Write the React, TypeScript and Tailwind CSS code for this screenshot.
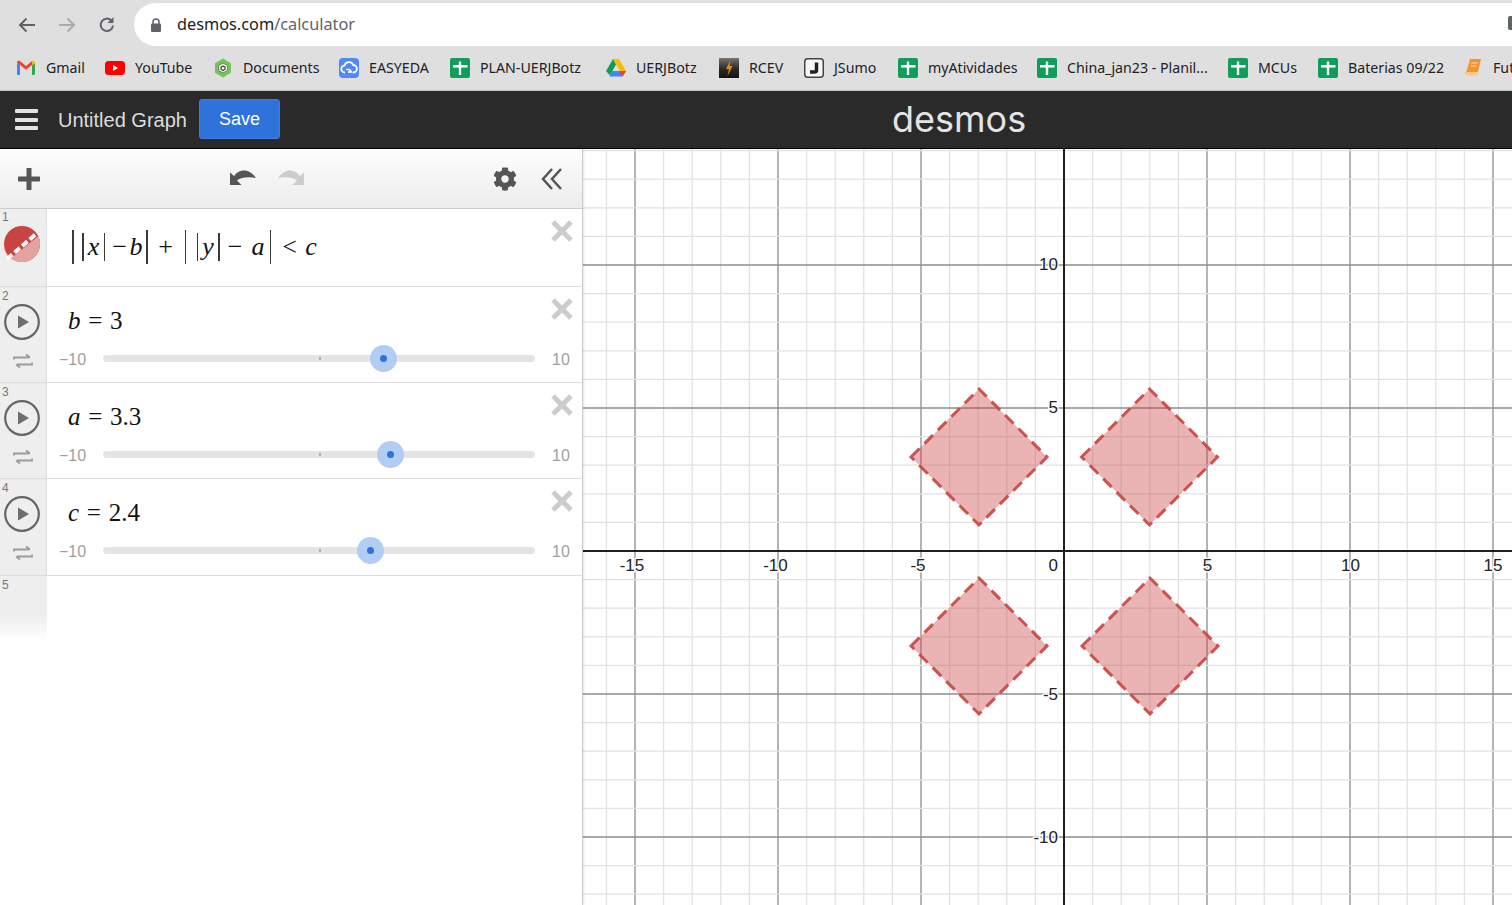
import React from "react";
import { FaCog } from "react-icons/fa";

const UNIT = 28.6;
const OX = 1064;
const OY = 551;

function Sheet() {
  return (
    <svg width="20" height="20" viewBox="0 0 20 20">
      <rect width="20" height="20" rx="2" fill="#0f9d58" />
      <rect x="3" y="7" width="14.500" height="2.600" fill="#fff" />
      <rect x="8.800" y="3.500" width="2.400" height="13.500" fill="#fff" />
    </svg>
  );
}
function Gmail() {
  return (
    <svg width="20" height="16" viewBox="0 0 20 16">
      <path d="M1 15V3l3 2v10H2a1 1 0 0 1-1-1z" fill="#4285f4" />
      <path d="M19 15V3l-3 2v10h2a1 1 0 0 0 1-1z" fill="#34a853" />
      <path d="M1 2.500C1 .8 3 .2 4 1l6 5 6-5v4l-6 4.800L4 5 1 3z" fill="#ea4335" />
      <path d="M16 1c1-.8 3-.2 3 1.500V3l-3 2z" fill="#fbbc04" />
    </svg>
  );
}
function YouTube() {
  return (
    <svg width="20" height="14" viewBox="0 0 20 14">
      <rect width="20" height="14" rx="3.500" fill="#f00" />
      <path d="M8 4l5 3-5 3z" fill="#fff" />
    </svg>
  );
}
function DocsIcon() {
  return (
    <svg width="20" height="20" viewBox="0 0 20 20">
      <path d="M10 .5l8 4.800v9.400l-8 4.800-8-4.800V5.300z" fill="#76c35a" />
      <path d="M10 5l4.500 2.500v5L10 15l-4.500-2.500v-5z" fill="#eef4ea" stroke="#5f8f55" strokeWidth="1" />
      <path d="M10 8l2 1.200v2L10 12.500l-2-1.300v-2z" fill="none" stroke="#444" strokeWidth="1.200" />
    </svg>
  );
}
function EasyEda() {
  return (
    <svg width="20" height="20" viewBox="0 0 20 20">
      <rect width="20" height="20" rx="4" fill="#5288f5" />
      <path d="M6 14.500a3.500 3.500 0 0 1-.4-7A4.600 4.600 0 0 1 14.300 7a3.700 3.700 0 0 1-.3 7.500" fill="none" stroke="#fff" strokeWidth="1.800" />
      <path d="M7 11.500h3.500l2 2.500H9" fill="none" stroke="#fff" strokeWidth="1.600" />
    </svg>
  );
}
function Drive() {
  return (
    <svg width="20" height="18" viewBox="0 0 20 18">
      <path d="M7 0h6l7 12h-6z" fill="#fbbc04" />
      <path d="M7 0l3 5.500L4 16.500 0 12z" fill="#0f9d58" />
      <path d="M6.500 12H20l-3.500 5.500H3.500z" fill="#4285f4" />
      <path d="M13 12h7l-3.500 5.500z" fill="#ea4335" />
    </svg>
  );
}
function Rcev() {
  return (
    <svg width="20" height="20" viewBox="0 0 20 20">
      <defs>
        <linearGradient id="rcevbg" x1="0" y1="0" x2="0" y2="1">
          <stop offset="0" stopColor="#7a7672" />
          <stop offset="0.5" stopColor="#2f2c2a" />
          <stop offset="1" stopColor="#111" />
        </linearGradient>
      </defs>
      <rect width="20" height="20" fill="url(#rcevbg)" />
      <path d="M11.500 2L7 11h3l-1.500 7L13.500 8h-3z" fill="#e08e1b" />
    </svg>
  );
}
function JSumo() {
  return (
    <svg width="20" height="20" viewBox="0 0 20 20">
      <rect x="0.750" y="0.750" width="18.500" height="18.500" rx="3" fill="#f7f7f7" stroke="#444" strokeWidth="1.500" />
      <path d="M12.500 4.500v7.500a2 2 0 0 1-2 2H6" fill="none" stroke="#222" strokeWidth="3.500" />
    </svg>
  );
}
function Book() {
  return (
    <svg width="20" height="20" viewBox="0 0 20 20">
      <path d="M7 1h11l-3.500 15H3.500c-1.500 0-1.500-2 0-2.500z" fill="#f59331" />
      <path d="M3.500 14H15l-.5 3.500H4c-1.500 0-2-2.500-.5-3.500z" fill="#fbc98a" />
      <path d="M8.500 5h6M8 8h6" stroke="#fde3c4" strokeWidth="1" />
    </svg>
  );
}

const bookmarks: [React.ReactNode, string, string][] = [
  [<Gmail />, "Gmail", "w-[39px]"],
  [<YouTube />, "YouTube", "w-[58px]"],
  [<DocsIcon />, "Documents", "w-[76px]"],
  [<EasyEda />, "EASYEDA", "w-[61px]"],
  [<Sheet />, "PLAN-UERJBotz", "w-[106px]"],
  [<Drive />, "UERJBotz", "w-[63px]"],
  [<Rcev />, "RCEV", "w-[35px]"],
  [<JSumo />, "JSumo", "w-[44px]"],
  [<Sheet />, "myAtividades", "w-[89px]"],
  [<Sheet />, "China_jan23 - Planil...", "w-[141px]"],
  [<Sheet />, "MCUs", "w-[40px]"],
  [<Sheet />, "Baterias 09/22", "w-[95px]"],
  [<Book />, "Fut", "w-[19px]"],
];

function BrowserChrome() {
  return (
    <div className="bg-[#dfdfdf] h-[91px] shrink-0 border-b border-[#c4c4c4] overflow-hidden font-['Noto_Sans','Open_Sans',sans-serif]">
      <div className="flex h-[46px] pt-[3px]">
        <div className="w-[134px] shrink-0 flex items-center pl-[17px] gap-[20px] text-[#5f6368]">
          <svg width="20" height="20" viewBox="0 0 20 20" fill="none" stroke="#5f6368" strokeWidth="2">
            <path d="M18 10H3M9.500 3.500L3 10l6.500 6.500" />
          </svg>
          <svg width="20" height="20" viewBox="0 0 20 20" fill="none" stroke="#a9abad" strokeWidth="2">
            <path d="M2 10h15M10.500 3.500L17 10l-6.500 6.500" />
          </svg>
          <svg width="20" height="20" viewBox="0 0 20 20" fill="none" stroke="#5f6368" strokeWidth="2">
            <path d="M16 10.500A6.200 6.200 0 1 1 14.300 5.500" />
            <path d="M16.500 2v6h-6z" fill="#5f6368" stroke="none" />
          </svg>
        </div>
        <div className="flex-1 bg-white rounded-l-[22px] flex items-center pl-[16px] relative">
          <svg width="12" height="14" viewBox="0 0 12 14" className="mr-[15px]">
            <path d="M3 6V4a3 3 0 0 1 6 0v2" fill="none" stroke="#5f6368" strokeWidth="1.500" />
            <rect x="1" y="5.500" width="10" height="8.500" rx="1.200" fill="#5f6368" />
          </svg>
          <span className="text-[16.300px] leading-none text-[#202124]">
            desmos.com<span className="text-[#5f6368]">/calculator</span>
          </span>
          <div className="absolute left-[1374px] top-[13px] w-[10px] h-[14px] rounded-[2px] bg-[#5f6368]" />
        </div>
      </div>
      <div className="flex items-center h-[44px] pl-[16px] gap-[20px] whitespace-nowrap">
        {bookmarks.map(([icon, label, w], i) => (
          <div key={i} className="flex items-center gap-[10px] shrink-0">
            <div className="w-[20px] h-[20px] flex items-center justify-center">{icon}</div>
            <span className={`${w} text-[14.200px] leading-none pt-[1px] text-[#202124]`}>{label}</span>
          </div>
        ))}
      </div>
    </div>
  );
}

function AppHeader() {
  return (
    <div className="relative h-[58px] shrink-0 bg-[#2a2a2a] border-b border-black flex items-center font-['Liberation_Sans',sans-serif]">
      <div className="ml-[15px] w-[23px] flex flex-col gap-[4.500px]">
        <div className="h-[4px] rounded-[1px] bg-[#e2e2e2]" />
        <div className="h-[4px] rounded-[1px] bg-[#e2e2e2]" />
        <div className="h-[4px] rounded-[1px] bg-[#e2e2e2]" />
      </div>
      <span className="ml-[20px] text-[20px] text-[#dddddd]">Untitled Graph</span>
      <button className="ml-[12px] mb-[1px] w-[81px] h-[40px] rounded-[3px] bg-[#2f72dc] border border-[#3f7fe0] text-white text-[18px] pt-[1px]">Save</button>
      <div className="absolute left-[892px] top-[6px] font-['Inter',sans-serif] text-[36px] leading-[44px] font-normal text-[#e4e4e4]">desmos</div>
    </div>
  );
}

function CloseX() {
  return (
    <svg width="24" height="24" viewBox="0 0 24 24" className="absolute right-[8px] top-[10px]">
      <path d="M3 3l18 18M21 3L3 21" stroke="#cccccc" strokeWidth="5" />
    </svg>
  );
}

function PanelToolbar() {
  return (
    <div className="h-[60px] shrink-0 flex items-center border-b border-[#cccccc] bg-gradient-to-b from-[#fdfdfd] to-[#ececec] pl-[18px]">
      <svg width="22" height="22" viewBox="0 0 22 22" className="shrink-0">
        <path d="M11 1v20M1 11h20" stroke="#555555" strokeWidth="5" strokeLinecap="round" />
      </svg>
      <svg width="26" height="17" viewBox="0 0 26 17" className="shrink-0 ml-[190px] mb-[2px]">
        <path d="M0 3.500V16h11.500L7 11.500c4-3 11-4 19-2.500C20 0 10-1 4 7z" fill="#555555" />
      </svg>
      <svg width="26" height="17" viewBox="0 0 26 17" className="shrink-0 ml-[22px] mb-[2px] -scale-x-100">
        <path d="M0 3.500V16h11.500L7 11.500c4-3 11-4 19-2.500C20 0 10-1 4 7z" fill="#cccccc" />
      </svg>
      <FaCog className="shrink-0 ml-[189px] text-[#555555]" size={24} />
      <svg width="22" height="24" viewBox="0 0 22 24" className="shrink-0 ml-[24px]">
        <path d="M11 2L2 12l9 10M20 2l-9 10 9 10" fill="none" stroke="#555555" strokeWidth="2.500" />
      </svg>
    </div>
  );
}

function Bar({ tall = false, ml }: { tall?: boolean; ml: string }) {
  return <div className={`${ml} w-[1.500px] bg-[#3a3a3a] shrink-0 ${tall ? "h-[34px]" : "h-[28px]"}`} />;
}
function Mi({ c, w }: { c: string; w: string }) {
  return <span className={`${w} shrink-0 text-center italic`}>{c}</span>;
}
function Mo({ c, w }: { c: string; w: string }) {
  return <span className={`${w} shrink-0 text-center`}>{c}</span>;
}

function ExpressionRow() {
  return (
    <div className="flex h-[78px] border-b border-[#dddddd] relative">
      <div className="w-[47px] shrink-0 bg-[#eeeeee] border-r border-[#dddddd]">
        <div className="text-[12px] leading-none pt-[2px] pl-[2px] text-[#777777]">1</div>
        <svg width="36" height="36" viewBox="0 0 36 36" className="ml-[4px] mt-[3px]">
          <circle cx="18" cy="18" r="18" fill="#c74440" />
          <path d="M0 18a18 18 0 0 0 36 0c0-3-.5-5-1.500-8L6 33a18 18 0 0 1-6-15z" fill="#e3a3a1" />
          <path d="M3 33L32 8" stroke="#ffffff" strokeWidth="4" strokeDasharray="7 3" />
        </svg>
      </div>
      <div className="flex items-center h-[76px] text-[26px] leading-none text-[#111111] font-['Liberation_Serif',serif] pb-[1px]">
        <Bar ml="ml-[25px]" tall />
        <Bar ml="ml-[8.500px]" />
        <Mi c="x" w="w-[20px]" />
        <Bar ml="ml-0" />
        <Mo c="−" w="w-[19px] ml-[5px]" />
        <Mi c="b" w="w-[14px]" />
        <Bar ml="ml-[3px]" tall />
        <Mo c="+" w="w-[26px] ml-[5px]" />
        <Bar ml="ml-[6px]" tall />
        <Bar ml="ml-[10.500px]" />
        <Mi c="y" w="w-[20px]" />
        <Bar ml="ml-0" />
        <Mo c="−" w="w-[23px] ml-[4px]" />
        <Mi c="a" w="w-[15px] ml-[4px]" />
        <Bar ml="ml-[4px]" tall />
        <Mo c="<" w="w-[23px] ml-[7px]" />
        <Mi c="c" w="w-[14px] ml-[3px]" />
      </div>
      <CloseX />
    </div>
  );
}

function SliderRow({ n, name, value, v, last = false }: { n: number; name: string; value: string; v: number; last?: boolean }) {
  const pct = ((v + 10) / 20) * 100;
  return (
    <div className={`flex border-b border-[#dddddd] relative ${last ? "h-[97px]" : "h-[96px]"}`}>
      <div className="w-[47px] shrink-0 bg-[#eeeeee] border-r border-[#dddddd] flex flex-col">
        <div className="text-[12px] leading-none pt-[3px] pl-[2px] text-[#777777]">{n}</div>
        <svg width="36" height="36" viewBox="0 0 36 36" className="ml-[4px] mt-[1.500px]">
          <circle cx="18" cy="18" r="16.800" fill="#eeeeee" stroke="#666666" strokeWidth="2.200" />
          <path d="M14 11.500l11 6.500-11 6.500z" fill="#6e6e6e" />
        </svg>
        <svg width="20" height="16" viewBox="0 0 20 16" className="ml-[13px] mt-[13px]" fill="none" stroke="#9b9b9b" strokeWidth="1.800">
          <path d="M1 6.500V4.500h15M13 1.500l4 3" />
          <path d="M19 9.500v2H4M7 14.500l-4-3" />
        </svg>
      </div>
      <div className="flex-1 flex flex-col font-['Liberation_Sans',sans-serif]">
        <div className="pl-[21px] pt-[18px] h-[57px] text-[25px] leading-[32px] text-[#111111] font-['Liberation_Serif',serif] whitespace-pre [word-spacing:1.500px]">
          <i>{name}</i> = {value}
        </div>
        <div className="flex items-center h-[30px] text-[16px] text-[#a0a0a0] pb-[1px]">
          <span className="w-[28px] ml-[12px] shrink-0 pt-[2px]">−10</span>
          <div className="relative ml-[16px] w-[432px] h-[7px] rounded-full bg-[#e4e4e4] shrink-0">
            <div className="absolute left-1/2 top-[2px] w-[2px] h-[3px] bg-[#aaaaaa]" />
            <div
              className="absolute top-[-10px] -ml-[13.500px] w-[27px] h-[27px] rounded-full bg-[#b2cdf3] flex items-center justify-center"
              style={{ left: `${pct}%` }}
            >
              <div className="w-[7px] h-[7px] rounded-full bg-[#2f72dc]" />
            </div>
          </div>
          <span className="ml-[17px] pt-[2px]">10</span>
        </div>
      </div>
      <CloseX />
    </div>
  );
}

function Panel() {
  return (
    <div className="w-[583px] shrink-0 bg-white border-r border-[#cccccc] flex flex-col relative z-10 shadow-[0_0_3px_rgba(0,0,0,0.2)] font-['Liberation_Sans',sans-serif]">
      <PanelToolbar />
      <ExpressionRow />
      <SliderRow n={2} name="b" value="3" v={3} />
      <SliderRow n={3} name="a" value="3.3" v={3.3} />
      <SliderRow n={4} name="c" value="2.4" v={2.4} last />
      <div className="w-[47px] h-[65px] bg-gradient-to-b from-[#eeeeee] from-60% to-white">
        <div className="text-[12px] leading-none pt-[3px] pl-[2px] text-[#777777]">5</div>
      </div>
    </div>
  );
}

function Graph() {
  const range = Array.from({ length: 40 }, (_, i) => i - 20);
  const xs = range.map((k) => ({ k, p: OX + k * UNIT })).filter((d) => d.p > 583 && d.p < 1512);
  const ys = range.map((k) => ({ k, p: OY + k * UNIT })).filter((d) => d.p > 149 && d.p < 905);
  const diamonds = [
    [979, 457],
    [1149.5, 457],
    [979, 646],
    [1150, 646],
  ];
  const r = 68;
  const xLabels: [string, number][] = [["-15", 632], ["-10", 775.5], ["-5", 918], ["5", 1207.5], ["10", 1350.5], ["15", 1493]];
  const yLabels: [string, number][] = [["10", 270], ["5", 413], ["-5", 699.5], ["-10", 843]];
  const halo = { paintOrder: "stroke" as const, stroke: "#ffffff", strokeWidth: 3, strokeOpacity: 0.9 };
  return (
    <div className="flex-1 min-w-0 bg-white">
      <svg viewBox="583 149 929 756" className="w-full h-full block">
        {xs.map(({ k, p }) => (
          <line key={`x${k}`} x1={p} x2={p} y1="149" y2="905" stroke={k % 5 === 0 ? "#8c8c8c" : "#e2e2e2"} strokeWidth="1.300" />
        ))}
        {ys.map(({ k, p }) => (
          <line key={`y${k}`} y1={p} y2={p} x1="583" x2="1512" stroke={k % 5 === 0 ? "#8c8c8c" : "#e2e2e2"} strokeWidth="1.300" />
        ))}
        <line x1="1064" x2="1064" y1="149" y2="905" stroke="#1f1f1f" strokeWidth="2" />
        <line x1="583" x2="1512" y1="551" y2="551" stroke="#1f1f1f" strokeWidth="2.200" />
        {diamonds.map(([cx, cy], i) => (
          <polygon
            key={i}
            points={`${cx - r},${cy} ${cx},${cy - r} ${cx + r},${cy} ${cx},${cy + r}`}
            fill="#c74440"
            fillOpacity="0.4"
            stroke="#c74440"
            strokeOpacity="0.9"
            strokeWidth="3"
            strokeDasharray="12 7"
          />
        ))}
        <g fontFamily="'Liberation Sans', sans-serif" fontSize="17" fill="#222222">
          {xLabels.map(([t, x]) => (
            <text key={t} x={x} y="571" textAnchor="middle" style={halo}>{t}</text>
          ))}
          <text x="1058" y="571" textAnchor="end" style={halo}>0</text>
          {yLabels.map(([t, y]) => (
            <text key={t} x="1058" y={y} textAnchor="end" style={halo}>{t}</text>
          ))}
        </g>
      </svg>
    </div>
  );
}

export default function App() {
  return (
    <div className="w-[1512px] h-[905px] overflow-hidden flex flex-col bg-white">
      <BrowserChrome />
      <AppHeader />
      <div className="flex flex-1 min-h-0">
        <Panel />
        <Graph />
      </div>
    </div>
  );
}
